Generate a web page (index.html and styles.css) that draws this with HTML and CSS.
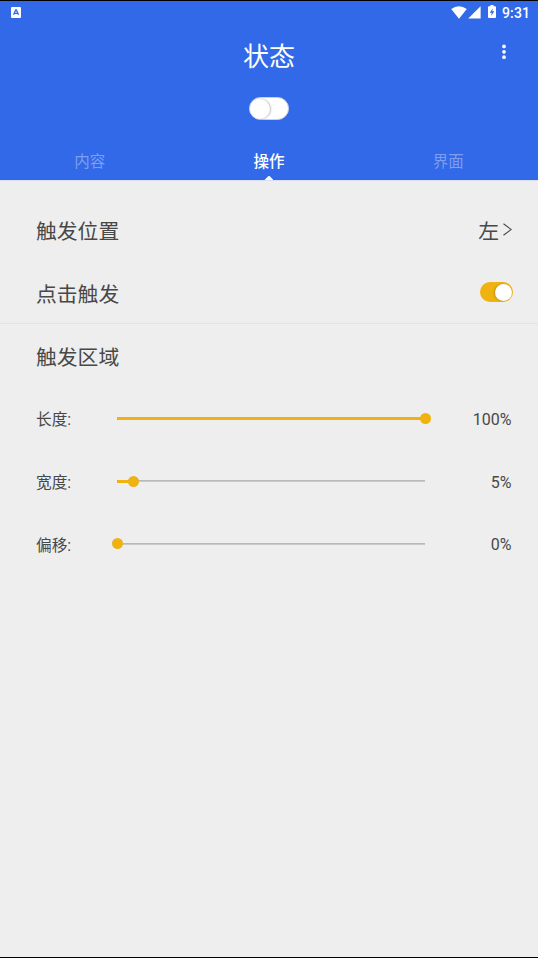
FILE: index.html
```html
<!DOCTYPE html>
<html lang="zh-CN">
<head>
<meta charset="utf-8">
<title>状态</title>
<link rel="stylesheet" href="styles.css">
</head>
<body>
<div class="screen">
  <header class="header">
    <div class="statusbar">
      <svg class="notice" width="10" height="11" viewBox="0 0 10 11"><rect width="10" height="11" rx="1" fill="#fff"/><path d="M2.600 7.800 4.700 3h.7l2.100 4.800M3.400 6.300h3.200" fill="none" stroke="#3269e8" stroke-width="1.300"/></svg>
      <svg class="wifi" width="16" height="13" viewBox="0 0 16 13"><path d="M.2 3Q8-2.6 15.8 3L8 12.7Z" fill="#fff"/></svg>
      <svg class="signal" width="13" height="13" viewBox="0 0 13 13"><path d="M12.6.2V12.6H.2Z" fill="#fff"/></svg>
      <svg class="battery" width="8" height="13" viewBox="0 0 8 13"><path d="M2.4 0h3.2v1.300H7q1 0 1 1V12q0 1-1 1H1q-1 0-1-1V2.300q0-1 1-1h1.400Z" fill="#fff"/><path d="M4.800 3.400 1.700 7.700h2l-.5 3.200 3.100-4.600h-2Z" fill="#3269e8"/></svg>
      <span class="clock">9:31</span>
    </div>
    <div class="titlebar">
      <h1 class="title">状态</h1>
      <svg class="more" width="4" height="16" viewBox="0 0 4 16" fill="#fff"><circle cx="2" cy="2.400" r="1.850"/><circle cx="2" cy="7.800" r="1.850"/><circle cx="2" cy="13.200" r="1.850"/></svg>
    </div>
    <div class="master"><span class="switch switch-off"><span class="knob"></span></span></div>
    <nav class="tabs">
      <span class="tab">内容</span>
      <span class="tab active">操作</span>
      <span class="tab">界面</span>
    </nav>
  </header>
  <main class="settings">
    <div class="row"><span class="name">触发位置</span><span class="value"><span class="name">左</span><svg width="9" height="13" viewBox="0 0 9 13"><path d="M.5.7 8.200 6.500.5 12.300" fill="none" stroke="#484848" stroke-width="1.100"/></svg></span></div>
    <div class="row row-switch"><span class="name">点击触发</span><span class="switch switch-on"><span class="knob"></span></span></div>
    <div class="row row-section"><span class="name">触发区域</span></div>
    <div class="slider-row"><span class="label">长度:</span><div class="slider full"><div class="fill"></div></div><span class="percent">100%</span></div>
    <div class="slider-row"><span class="label">宽度:</span><div class="slider low"><div class="fill"></div></div><span class="percent">5%</span></div>
    <div class="slider-row"><span class="label">偏移:</span><div class="slider zero"><div class="fill"></div></div><span class="percent">0%</span></div>
  </main>
</div>
</body>
</html>
```
FILE: styles.css
```css
* { box-sizing: border-box; }
body {
  margin: 0;
  font-family: Roboto, "Noto Sans CJK SC", sans-serif;
  color: #484848;
}
.screen {
  height: 958px;
  border-top: 1px solid #000;
  border-bottom: 1px solid #000;
  background: #eee;
}
.header {
  height: 179px;
  background: #3269e8;
  color: #fff;
  display: flex;
  flex-direction: column;
}
.statusbar {
  height: 22px;
  padding: 0 8px 0 11px;
  display: flex;
  align-items: center;
}
.notice { margin-right: auto; }
.signal { margin: 1px 0 0 1px; }
.battery { margin: 0 6px 2px 7px; }
.clock { font-size: 14px; font-weight: 500; line-height: 22px; letter-spacing: .1px; margin-top: 1px; }
.titlebar {
  height: 62px;
  display: grid;
  grid-template-columns: 60px 1fr 60px;
  align-items: center;
}
.title {
  grid-column: 2;
  margin: 5px 0 0;
  text-align: center;
  font-size: 26px;
  line-height: 38px;
  font-weight: 400;
}
.more { margin: -5px 0 0 23.5px; }
.master {
  height: 46px;
  padding-top: 1px;
  display: flex;
  justify-content: center;
  align-items: center;
}
.switch { display: flex; align-items: center; }
.knob { display: block; border-radius: 50%; background: #fff; }
.switch-off {
  width: 40px;
  height: 23px;
  border: 1px solid #ccd0dc;
  border-radius: 11.5px;
  background: #fff;
}
.switch-off .knob { width: 20px; height: 20px; box-shadow: 1px 0 2px #0004; }
.tabs { flex: 1; display: grid; grid-template-columns: repeat(3, 1fr); }
.tab {
  position: relative;
  text-align: center;
  font-size: 15.5px;
  line-height: 24px;
  padding-top: 19px;
  color: #7c9ff0;
}
.active { color: #fff; font-weight: 500; }
.active::after {
  content: "";
  position: absolute;
  left: 50%;
  bottom: 0;
  margin-left: -4.5px;
  width: 9px;
  height: 4.5px;
  background: #fff;
  clip-path: polygon(50% 0, 100% 100%, 0 100%);
}
.settings { padding-top: 18px; border-top: 1px solid #d7def0; }
.row {
  height: 62px;
  padding: 0 26px 0 36px;
  display: flex;
  justify-content: space-between;
  align-items: center;
  font-size: 20.8px;
  line-height: 30px;
}
.name { padding-top: 4px; }
.value { display: flex; align-items: center; gap: 4px; }
.value svg { margin-bottom: 1px; }
.row-switch { height: 63px; padding-right: 25px; border-bottom: 1px solid #e4e4e4; }
.row-switch .name { padding-top: 5px; }
.row-section { height: 63px; }
.switch-on {
  width: 33px;
  height: 20px;
  padding: 1px;
  border-radius: 10px;
  background: #efb211;
  justify-content: flex-end;
}
.switch-on .knob { width: 17px; height: 17px; box-shadow: -1px 0 2px #0003; }
.slider-row {
  height: 62.8px;
  padding: 0 26.5px 0 36px;
  display: grid;
  grid-template-columns: 81px 308px 1fr;
  align-items: center;
  font-size: 15.7px;
}
.label { padding-top: .5px; }
.percent { text-align: right; font-size: 16px; padding-top: 2px; }
.slider {
  height: 11px;
  display: flex;
  align-items: center;
  background: linear-gradient(#b9b9b9, #b9b9b9) center / 100% 1.7px no-repeat;
}
.fill { position: relative; height: 3px; background: #efb211; }
.fill::after {
  content: "";
  position: absolute;
  right: -5.5px;
  top: -4px;
  width: 11px;
  height: 11px;
  border-radius: 50%;
  background: #efb211;
}
.full .fill { width: 100%; }
.low .fill { width: 5.2%; }
.zero .fill { width: 0; }
```
